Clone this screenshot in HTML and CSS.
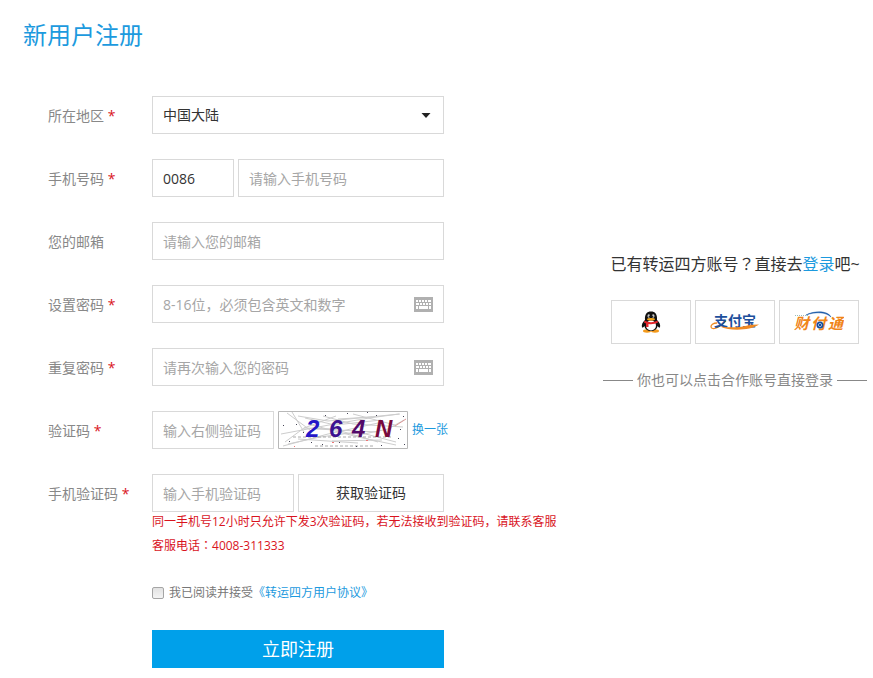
FILE: index.html
```html
<!DOCTYPE html>
<html lang="zh-CN">
<head>
<meta charset="utf-8">
<meta name="viewport" content="width=device-width, initial-scale=1">
<title>新用户注册</title>
<link rel="stylesheet" href="styles.css">
</head>
<body>
<h1 class="title">新用户注册</h1>
<main class="page">
  <form class="form">
    <div class="row">
      <label class="label" for="region">所在地区 <span class="req">*</span></label>
      <div class="field select-field">
        <select id="region" class="control"><option>中国大陆</option></select>
        <svg class="caret" width="10" height="5" viewBox="0 0 10 5" aria-hidden="true"><path d="M0.5 0h9L5 5z" fill="#222"/></svg>
      </div>
    </div>
    <div class="row">
      <label class="label" for="phone">手机号码 <span class="req">*</span></label>
      <div class="field">
        <input class="control code" type="text" value="0086" aria-label="国家代码">
        <input class="control" id="phone" type="tel" placeholder="请输入手机号码">
      </div>
    </div>
    <div class="row">
      <label class="label" for="email">您的邮箱</label>
      <div class="field"><input class="control" id="email" type="email" placeholder="请输入您的邮箱"></div>
    </div>
    <div class="row">
      <label class="label" for="pwd">设置密码 <span class="req">*</span></label>
      <div class="field">
        <input class="control" id="pwd" type="password" placeholder="8-16位，必须包含英文和数字">
        <svg class="keyboard" width="19" height="15" viewBox="0 0 19 15" aria-hidden="true"><path d="M0 0h19v15H0z" fill="#b0b0b0"/><path d="M2 3h2v2H2zM5 3h2v2H5zM8 3h2v2H8zM11 3h2v2h-2zM14 3h3v2h-3zM2 6h3v2H2zM6 6h2v2H6zM9 6h2v2H9zM12 6h2v2h-2zM15 6h2v2h-2zM2 9h2v3H2zM5 9h9v3H5zM15 9h2v3h-2z" fill="#fff"/></svg>
      </div>
    </div>
    <div class="row">
      <label class="label" for="pwd2">重复密码 <span class="req">*</span></label>
      <div class="field">
        <input class="control" id="pwd2" type="password" placeholder="请再次输入您的密码">
        <svg class="keyboard" width="19" height="15" viewBox="0 0 19 15" aria-hidden="true"><path d="M0 0h19v15H0z" fill="#b0b0b0"/><path d="M2 3h2v2H2zM5 3h2v2H5zM8 3h2v2H8zM11 3h2v2h-2zM14 3h3v2h-3zM2 6h3v2H2zM6 6h2v2H6zM9 6h2v2H9zM12 6h2v2h-2zM15 6h2v2h-2zM2 9h2v3H2zM5 9h9v3H5zM15 9h2v3h-2z" fill="#fff"/></svg>
      </div>
    </div>
    <div class="row">
      <label class="label" for="captcha">验证码 <span class="req">*</span></label>
      <div class="field">
        <input class="control" id="captcha" type="text" placeholder="输入右侧验证码">
        <svg class="captcha" width="130" height="38" viewBox="0 0 130 38" role="img" aria-label="验证码图片">
          <path d="M.5 .5h129v37H.5z" fill="#fff" stroke="#b8b8b8"/>
          <g fill="none" stroke="#cdcdcd" stroke-width="1">
            <path d="M9 2l23 17M14 1l12 20M3 23l48-9 40-7 30-4M10 33l32-7 38-5 38 10M5 35l45-12 50-11M27 7l30 7 46-5M20 5l30 5 72-7M30 13l50 13 38 8M26 17l32-12M7 31l19-14 30 1 44 13M45 5l30 8 50 3M60 8l34-2M38 18l62 3M54 30l50-1M20 28l60 4M75 3l42 11M76 25l34-7 16-9"/>
          </g>
          <path d="M15 26h99M37 35h60" fill="none" stroke="#aaa" stroke-dasharray="3 2"/>
          <path d="M117 15l11-7" stroke="#d99" fill="none"/>
          <path d="M11 30h1v1h-1zM25 21h1v1h-1zM47 4h1v1h-1zM69 2h1v1h-1zM89 1h1v1h-1zM98 4h1v1h-1zM112 13h1v1h-1zM120 27h1v1h-1zM103 34h1v1h-1zM78 35h1v1h-1zM61 31h1v1h-1zM44 33h1v1h-1zM125 5h1v1h-1zM122 18h1v1h-1zM18 13h1v1h-1zM5 14h1v1h-1zM126 33h1v1h-1zM33 31h1v1h-1z" fill="#445"/>
          <path d="M54 31h2v1h-2zM88 29h2v1h-2zM16 35h1v1h-1z" fill="#e77"/>
          <g class="captcha-text">
            <text x="28" y="26" fill="#2416c8">2</text>
            <text x="51" y="26" fill="#3d1290">6</text>
            <text x="74" y="26" fill="#520a68">4</text>
            <text x="97" y="26" fill="#780a3c">N</text>
          </g>
        </svg>
        <a class="link refresh" href="#">换一张</a>
      </div>
    </div>
    <div class="row">
      <label class="label" for="sms">手机验证码 <span class="req">*</span></label>
      <div class="field">
        <input class="control" id="sms" type="text" placeholder="输入手机验证码">
        <button class="control sms-button" type="button">获取验证码</button>
      </div>
    </div>
    <div class="below">
      <p class="notice">同一手机号12小时只允许下发3次验证码，若无法接收到验证码，请联系客服<br>客服电话<span class="mid" lang="zh-TW">：</span>4008-311333</p>
      <div class="agree">
        <input class="check" type="checkbox" id="agree"><label for="agree">我已阅读并接受</label><a class="link" href="#">《转运四方用户协议》</a>
      </div>
      <button class="submit" type="submit">立即注册</button>
    </div>
  </form>
  <aside class="side">
    <p class="have">已有转运四方账号<span class="mid" lang="zh-TW">？</span>直接去<a class="link" href="#">登录</a>吧~</p>
    <div class="partners">
      <a class="partner" href="#" aria-label="QQ">
        <svg width="20" height="22" viewBox="0 0 20 22" aria-hidden="true">
          <ellipse cx="6" cy="20" rx="4" ry="1.7" fill="#f39a1c"/><ellipse cx="14" cy="20" rx="4" ry="1.7" fill="#f39a1c"/>
          <path d="M4 9C1.500 11 .3 14 1 16.500c.8.5 2-.7 2.500-1.500C4 18.500 6.500 20 10 20s6-1.500 6.500-5c.5.8 1.700 2 2.500 1.500.7-2.500-.5-5.500-3-7.500C16.500 3 14 .5 10 .5S3.500 3 4 9z" fill="#111"/>
          <ellipse cx="10" cy="14.500" rx="5" ry="5" fill="#fff"/>
          <ellipse cx="7.800" cy="5" rx="1.300" ry="1.700" fill="#ddd"/><ellipse cx="12.200" cy="5" rx="1.300" ry="1.700" fill="#ddd"/>
          <circle cx="8.300" cy="5.200" r=".7"/><circle cx="11.700" cy="5.200" r=".7"/>
          <ellipse cx="10" cy="8.300" rx="4" ry="1.200" fill="#f5a81c"/>
          <path d="M3.500 9.500c4 2.200 9 2.200 13 0l.5 2c-3 1.600-6.500 2-9.500 1.500V16H5v-3.500l-2-1z" fill="#e3262c"/>
        </svg>
      </a>
      <a class="partner" href="#" aria-label="支付宝">
        <svg width="50" height="24" viewBox="0 -3 50 24" aria-hidden="true">
          <path d="M7 10C3 10 .8 12 1 14c.3 2 4 2 6.500.5C11 12.500 13 10 16 8" fill="none" stroke="#f08a24" stroke-width="1.300"/>
          <text class="alipay" x="4" y="13" fill="#1d4f9c">支付宝</text>
          <path d="M10 13.500c9 1.500 22 1 31-1.700l8-.3C40 17.500 21 18.500 10 13.500z" fill="#f08a24"/>
        </svg>
      </a>
      <a class="partner" href="#" aria-label="财付通">
        <svg width="50" height="24" viewBox="0 -2 50 24" aria-hidden="true">
          <text class="tenpay" x="0" y="17" fill="#f08519">财</text>
          <text class="tenpay" x="17" y="17" fill="#f08519">付</text>
          <text class="tenpay" x="34" y="17" fill="#f08519">通</text>
          <path d="M12 3C20-1.500 34-1.500 37 5 32 0 22-.5 12 3z" fill="#1d5ba8" stroke="#1d5ba8" stroke-width=".5"/>
          <path d="M1 3.500h14" stroke="#9bb" stroke-dasharray="1 1"/>
          <circle cx="26" cy="13" r="2.600" fill="#fff" stroke="#174f9e" stroke-width="1.800"/><path d="M25 12h2v2h-2z" fill="#174f9e"/>
        </svg>
      </a>
    </div>
    <p class="hint">你也可以点击合作账号直接登录</p>
  </aside>
</main>
</body>
</html>
```
FILE: styles.css
```css
* { box-sizing: border-box; }
body {
  margin: 0;
  background: #fff;
  color: #333;
  font: 14px/20px "Open Sans", "Noto Sans CJK SC", sans-serif;
}
p { margin: 0; }
button, input, select { font: inherit; color: inherit; }
.title {
  margin: 0;
  padding: 17px 23px 0;
  font-size: 24px;
  line-height: 36px;
  font-weight: 400;
  color: #1c9ade;
}
.page {
  display: flex;
  justify-content: space-between;
  align-items: flex-start;
  padding: 43px 6px 8px 48px;
}
.form { flex: 0 1 516px; }
.row {
  display: grid;
  grid-template-columns: 104px 292px;
  align-items: center;
  margin-bottom: 25px;
}
.label {
  padding-top: 2px;
  color: #888;
  white-space: nowrap;
}
.req { color: #d9141e; }
.field {
  position: relative;
  display: flex;
  align-items: center;
  gap: 4px;
}
.control {
  flex: 1 1 0;
  min-width: 0;
  height: 38px;
  padding: 0 10px;
  border: 1px solid #d9d9d9;
  border-radius: 0;
  background: #fff;
  outline: 0;
}
.control::placeholder { color: #a6a6a6; opacity: 1; }
select.control { appearance: none; }
.code { flex: 0 0 82px; }
.caret {
  position: absolute;
  right: 13px;
  top: 17px;
  pointer-events: none;
}
.keyboard {
  position: absolute;
  right: 11px;
  top: 12px;
}
.field #captcha { flex: 0 0 122px; }
.captcha { flex: none; }
.captcha-text {
  font: italic bold 24px "Liberation Sans Narrow", "Liberation Sans", sans-serif;
}
.link { color: #1c9ade; text-decoration: none; }
.refresh { font-size: 12px; white-space: nowrap; }
.field #sms { flex: 0 0 142px; }
.sms-button { cursor: pointer; }
.below { margin: -27px 0 0 104px; }
.mid { font-family: "Noto Sans CJK TC", sans-serif; }
.notice {
  font-size: 12px;
  line-height: 23px;
  color: #d9141e;
  white-space: nowrap;
}
.agree {
  display: flex;
  align-items: center;
  margin: 26px 0 27px;
  font-size: 12px;
  color: #777;
}
.check {
  appearance: none;
  width: 12px;
  height: 12px;
  margin: 0 5px 0 0;
  border: 1px solid #a5a5a5;
  border-radius: 2px;
  background: linear-gradient(#e2e2e2, #f4f4f4);
}
.check:checked { background: #00a0ea; }
.submit {
  display: block;
  width: 292px;
  height: 38px;
  padding: 0;
  border: 0;
  background: #00a0ea;
  color: #fff;
  font-size: 18px;
  cursor: pointer;
}
.side {
  flex: none;
  margin-top: 155px;
  text-align: center;
}
.have { font-size: 16px; line-height: 24px; }
.partners {
  display: flex;
  justify-content: center;
  gap: 4px;
  margin: 24px 0 26px;
}
.partner {
  display: flex;
  align-items: center;
  justify-content: center;
  width: 80px;
  height: 44px;
  border: 1px solid #d9d9d9;
}
.alipay { font: bold 14px "Noto Sans CJK SC", sans-serif; }
.tenpay { font: italic bold 15px "Noto Sans CJK SC", sans-serif; }
.hint {
  display: flex;
  align-items: center;
  gap: 4px;
  color: #888;
}
.hint::before, .hint::after {
  content: "";
  width: 30px;
  border-top: 1px solid #888;
}
```
